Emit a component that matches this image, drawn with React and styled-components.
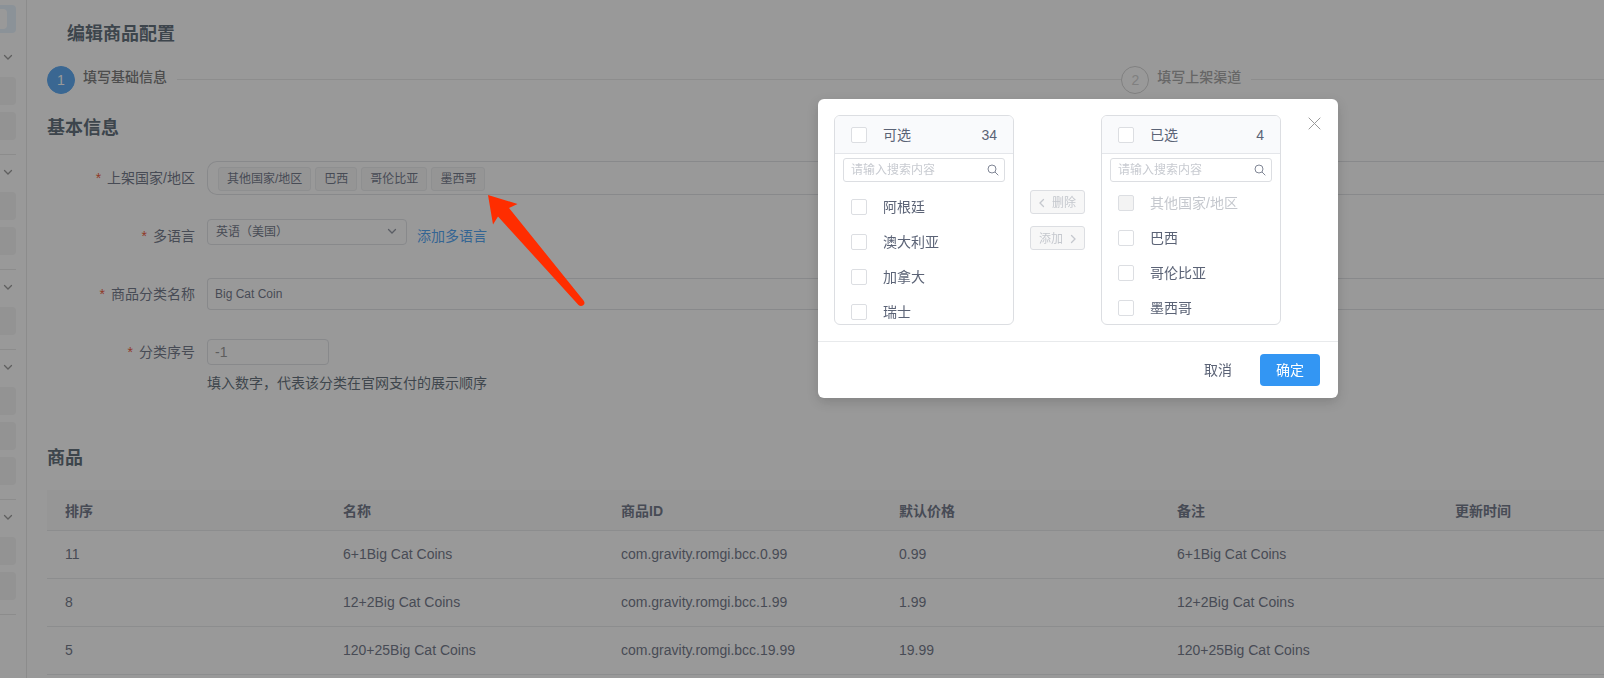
import React from "react";
import styled, { createGlobalStyle } from "styled-components";

const GlobalStyle = createGlobalStyle`
  * { box-sizing: border-box; }
  body {
    margin: 0;
    overflow: hidden;
    background: #fff;
    color: #5b6376;
    font: 14px/20px "Liberation Sans", "Noto Sans CJK SC", sans-serif;
  }
  button, input, select { font: inherit; color: inherit; margin: 0; }
`;

const Page = styled.div`
  display: flex;
  min-height: 100vh;
`;

const Sidebar = styled.nav`
  width: 27px;
  flex: none;
  padding: 5px 10px 0 0;
  border-right: 1px solid #e4e4e4;
`;

const MenuItem = styled.div`
  height: 28px;
  display: flex;
  align-items: center;
  border-radius: 0 4px 4px 0;
  background: ${(p) => (p.$active ? "#e3f1fd" : "#f2f2f2")};
`;

const MenuIcon = styled.span`
  width: 7px;
  height: 20px;
  border-radius: 0 4px 4px 0;
  background: #fff;
`;

const MenuGroup = styled.div`
  display: flex;
  flex-direction: column;
  gap: 7px;
  padding-bottom: 14px;
  border-bottom: 1px solid #e4e4e4;
  &:nth-child(2) { margin-top: 7px; }
`;

const MenuToggle = styled.button`
  height: 30px;
  padding: 5px 4px 0 0;
  border: 0;
  background: none;
  display: flex;
  align-items: center;
  justify-content: flex-end;
  color: #8a8a8a;
`;

const Main = styled.main`
  flex: 1;
  min-width: 0;
  padding: 20px 0 0 20px;
`;

const Title = styled.h2`
  margin: 0;
  padding-left: ${(p) => (p.$page ? "20px" : "0")};
  font-size: 18px;
  line-height: 28px;
  font-weight: 700;
  color: #465665;
`;

const Steps = styled.ol`
  display: grid;
  grid-template-columns: 69% 31%;
  margin: 18px 0 0;
  padding: 0;
  list-style: none;
`;

const Step = styled.li`
  display: flex;
  height: 28px;
  line-height: 22px;
  color: ${(p) => (p.$current ? "#666" : "#999")};
  font-weight: 500;
  &::after {
    content: "";
    flex: 1;
    height: 1px;
    margin: 13px 0 0 10px;
    background: #e6e6e6;
  }
`;

const StepNumber = styled.span`
  width: 28px;
  height: 28px;
  margin-right: 8px;
  border: 1px solid ${(p) => (p.$current ? "#409af0" : "#ccc")};
  border-radius: 50%;
  display: flex;
  align-items: center;
  justify-content: center;
  background: ${(p) => (p.$current ? "#409af0" : "#fff")};
  color: ${(p) => (p.$current ? "#fff" : "#ccc")};
  font-weight: 400;
`;

const Section = styled.section`
  margin-top: 20px;
`;

const Form = styled.form`
  margin-top: 19px;
  display: flex;
  flex-direction: column;
`;

const FormRow = styled.div`
  display: flex;
  gap: 12px;
  min-height: 58px;
`;

const Label = styled.label`
  width: 148px;
  flex: none;
  height: 34px;
  line-height: 34px;
  text-align: right;
  &::before {
    content: "*";
    margin-right: 6px;
    color: #ed4014;
  }
`;

const Field = styled.div`
  flex: 1;
  min-width: 0;
  height: 34px;
  display: flex;
  align-items: ${(p) => (p.$top ? "flex-start" : "center")};
  gap: 10px;
`;

const TagBox = styled.div`
  flex: 1;
  height: 34px;
  display: flex;
  align-items: center;
  gap: 4px;
  padding: 2px 0 0 10px;
  border: 1px solid #dcdee2;
  border-right: 0;
  border-radius: 10px 0 0 10px;
`;

const Tag = styled.span`
  height: 24px;
  padding: 0 8px;
  border: 1px solid #e8eaec;
  border-radius: 3px;
  background: #f7f7f7;
  font-size: 12px;
  line-height: 22px;
`;

const SelectWrap = styled.div`
  position: relative;
  width: 200px;
  svg {
    position: absolute;
    top: 10px;
    right: 11px;
    color: #808695;
    pointer-events: none;
  }
`;

const Select = styled.select`
  display: block;
  width: 100%;
  height: 26px;
  padding: 0 8px;
  appearance: none;
  border: 1px solid #dcdee2;
  border-radius: 4px;
  background: #fff;
  font-size: 12px;
`;

const AddLink = styled.a`
  color: #3496f2;
  text-decoration: none;
  line-height: 34px;
`;

const TextInput = styled.input`
  flex: 1;
  min-width: 0;
  height: 32px;
  padding: 0 7px;
  border: 1px solid #dcdee2;
  border-right: 0;
  border-radius: 4px 0 0 4px;
  background: #fff;
  font-size: 12px;
`;

const NumberField = styled.div`
  display: flex;
  flex-direction: column;
  gap: 8px;
  padding-top: 4px;
`;

const NumberInput = styled.input`
  width: 122px;
  height: 26px;
  padding: 0 7px;
  border: 1px solid #dcdee2;
  border-radius: 4px;
  background: #fff;
  color: #888;
`;

const Hint = styled.p`
  margin: 0;
  color: #4a5866;
`;

const ProductSection = styled.section`
  margin-top: 51px;
`;

const Table = styled.table`
  width: 100%;
  margin-top: 18px;
  table-layout: fixed;
  border-collapse: collapse;
  th, td {
    height: 48px;
    padding: 0 18px;
    border-bottom: 1px solid #e4e6e9;
    text-align: left;
    white-space: nowrap;
  }
  th {
    height: 40px;
    padding-top: 3px;
    background: #f8f8f9;
    font-weight: 700;
  }
`;

const Column = styled.col`
  width: ${(p) => (p.$last ? "auto" : "278px")};
`;

const Mask = styled.div`
  position: fixed;
  inset: 0;
  background: rgba(51, 51, 51, 0.5);
`;

const Arrow = styled.svg`
  position: absolute;
  left: 488px;
  top: 195px;
`;

const Dialog = styled.div`
  position: absolute;
  top: 99px;
  right: 266px;
  width: 520px;
  border-radius: 6px;
  background: #fff;
  box-shadow: 0 4px 12px rgba(0, 0, 0, 0.15);
`;

const CloseButton = styled.button`
  position: absolute;
  top: 18px;
  right: 17px;
  padding: 0;
  width: 13px;
  height: 13px;
  border: 0;
  background: none;
  color: #999;
  display: flex;
`;

const DialogBody = styled.div`
  display: flex;
  align-items: center;
  gap: 16px;
  padding: 16px;
`;

const DialogFooter = styled.footer`
  display: flex;
  justify-content: flex-end;
  gap: 12px;
  padding: 12px 18px;
  border-top: 1px solid #e8eaec;
`;

const ActionButton = styled.button`
  height: 32px;
  padding: 0 16px;
  border: 0;
  border-radius: 4px;
  background: ${(p) => (p.$primary ? "#3396f3" : "transparent")};
  color: ${(p) => (p.$primary ? "#fff" : "#5b6376")};
`;

const Panel = styled.section`
  width: 180px;
  height: 210px;
  border: 1px solid #dcdee2;
  border-radius: 6px;
  overflow: hidden;
`;

const PanelHeader = styled.header`
  display: flex;
  align-items: center;
  justify-content: space-between;
  height: 38px;
  padding: 0 16px;
  border-bottom: 1px solid #e4e6ea;
  background: #f9fafc;
`;

const CheckLabel = styled.label`
  display: flex;
  align-items: center;
  gap: 16px;
  color: ${(p) => (p.$disabled ? "#c5c8ce" : "#5b6376")};
`;

const Checkbox = styled.input`
  appearance: none;
  width: 16px;
  height: 16px;
  margin: 0;
  border: 1px solid #dcdee2;
  border-radius: 2px;
  background: #fff;
  &:disabled { background: #f3f3f3; }
`;

const SearchBox = styled.div`
  display: flex;
  align-items: center;
  height: 24px;
  margin: 4px 8px 0;
  padding: 0 5px 0 7px;
  border: 1px solid #dcdee2;
  border-radius: 3px;
  color: #808695;
`;

const SearchInput = styled.input`
  flex: 1;
  min-width: 0;
  padding: 0;
  border: 0;
  outline: 0;
  background: none;
  font-size: 12px;
  line-height: 20px;
  &::placeholder { color: #c8cbd1; opacity: 1; }
`;

const Options = styled.ul`
  display: flex;
  flex-direction: column;
  gap: 15px;
  margin: ${(p) => (p.$tall ? "15px" : "11px")} 0 0;
  padding: 0 16px;
  list-style: none;
`;

const Transfer = styled.div`
  display: flex;
  flex-direction: column;
  gap: 12px;
`;

const MoveButton = styled.button`
  width: 55px;
  height: 24px;
  padding: 1px 0 0;
  display: flex;
  align-items: center;
  justify-content: center;
  gap: 8px;
  border: 1px solid #dcdee2;
  border-radius: 3px;
  background: #f7f7f7;
  font-size: 12px;
  &:disabled { color: #c5c8ce; }
`;

const chevrons = {
  down: [8, 5, "M0.5 0.5 4 4 7.5 0.5"],
  left: [5, 8, "M4.5 0.5 1 4 4.5 7.5"],
  right: [5, 8, "M0.5 0.5 4 4 0.5 7.5"],
};

function Chevron({ direction }) {
  const [width, height, d] = chevrons[direction];
  return (
    <svg width={width} height={height} fill="none" stroke="currentColor" strokeWidth="1.3" strokeLinecap="round" overflow="visible" aria-hidden="true">
      <path d={d} />
    </svg>
  );
}

const menuGroups = [2, 2, 1, 3, 2];
const countries = ["其他国家/地区", "巴西", "哥伦比亚", "墨西哥"];
const available = ["阿根廷", "澳大利亚", "加拿大", "瑞士"];
const columns = ["排序", "名称", "商品ID", "默认价格", "备注", "更新时间"];
const products = [
  ["11", "6+1Big Cat Coins", "com.gravity.romgi.bcc.0.99", "0.99", "6+1Big Cat Coins", ""],
  ["8", "12+2Big Cat Coins", "com.gravity.romgi.bcc.1.99", "1.99", "12+2Big Cat Coins", ""],
  ["5", "120+25Big Cat Coins", "com.gravity.romgi.bcc.19.99", "19.99", "120+25Big Cat Coins", ""],
];

function TransferPanel({ title, count, items, tall, disabledItem }) {
  return (
    <Panel>
      <PanelHeader>
        <CheckLabel><Checkbox type="checkbox" />{title}</CheckLabel>
        <span>{count}</span>
      </PanelHeader>
      <SearchBox>
        <SearchInput type="text" placeholder="请输入搜索内容" aria-label={title} />
        <svg width="12" height="12" viewBox="0 0 12 12" fill="none" stroke="currentColor" aria-hidden="true">
          <circle cx="5" cy="5" r="4" />
          <path d="M8 8 11.3 11.3" />
        </svg>
      </SearchBox>
      <Options $tall={tall}>
        {items.map((item) => (
          <li key={item}>
            <CheckLabel $disabled={item === disabledItem}>
              <Checkbox type="checkbox" disabled={item === disabledItem} />{item}
            </CheckLabel>
          </li>
        ))}
      </Options>
    </Panel>
  );
}

export default function App() {
  return (
    <>
      <GlobalStyle />
      <Page>
        <Sidebar>
          <MenuItem $active><MenuIcon /></MenuItem>
          {menuGroups.map((count, group) => (
            <MenuGroup key={group}>
              <MenuToggle type="button" aria-label="展开"><Chevron direction="down" /></MenuToggle>
              {Array.from({ length: count }, (_, i) => <MenuItem key={i} />)}
            </MenuGroup>
          ))}
        </Sidebar>
        <Main>
          <Title as="h1" $page>编辑商品配置</Title>
          <Steps>
            <Step $current><StepNumber $current>1</StepNumber>填写基础信息</Step>
            <Step><StepNumber>2</StepNumber>填写上架渠道</Step>
          </Steps>
          <Section>
            <Title>基本信息</Title>
            <Form>
              <FormRow>
                <Label as="span">上架国家/地区</Label>
                <Field>
                  <TagBox>{countries.map((c) => <Tag key={c}>{c}</Tag>)}</TagBox>
                </Field>
              </FormRow>
              <FormRow>
                <Label htmlFor="language">多语言</Label>
                <Field $top>
                  <SelectWrap>
                    <Select id="language"><option>英语（美国）</option></Select>
                    <Chevron direction="down" />
                  </SelectWrap>
                  <AddLink href="#language">添加多语言</AddLink>
                </Field>
              </FormRow>
              <FormRow>
                <Label htmlFor="category">商品分类名称</Label>
                <Field><TextInput id="category" type="text" defaultValue="Big Cat Coin" /></Field>
              </FormRow>
              <FormRow>
                <Label htmlFor="order">分类序号</Label>
                <NumberField>
                  <NumberInput id="order" type="text" defaultValue="-1" />
                  <Hint>填入数字，代表该分类在官网支付的展示顺序</Hint>
                </NumberField>
              </FormRow>
            </Form>
          </Section>
          <ProductSection>
            <Title>商品</Title>
            <Table>
              <colgroup>
                {columns.map((c, i) => <Column key={c} $last={i === columns.length - 1} />)}
              </colgroup>
              <thead>
                <tr>{columns.map((c) => <th key={c} scope="col">{c}</th>)}</tr>
              </thead>
              <tbody>
                {products.map((row) => (
                  <tr key={row[0]}>{row.map((cell, i) => <td key={i}>{cell}</td>)}</tr>
                ))}
              </tbody>
            </Table>
          </ProductSection>
        </Main>
      </Page>
      <Mask>
        <Arrow width="98" height="112" viewBox="0 0 98 112" aria-hidden="true">
          <path d="M0 0 29.5 9 21 13 95.5 105.5Q97.5 108 95.5 110 93 112 90.5 110L10 21.5 5 29.5Z" fill="#ff2d00" />
        </Arrow>
        <Dialog role="dialog" aria-modal="true" aria-label="上架国家/地区">
          <CloseButton type="button" aria-label="关闭">
            <svg width="13" height="13" viewBox="0 0 13 13" stroke="currentColor" aria-hidden="true">
              <path d="M0.7 0.7 12.3 12.3M12.3 0.7 0.7 12.3" />
            </svg>
          </CloseButton>
          <DialogBody>
            <TransferPanel title="可选" count={34} items={available} tall />
            <Transfer>
              <MoveButton type="button" disabled><Chevron direction="left" />删除</MoveButton>
              <MoveButton type="button" disabled>添加<Chevron direction="right" /></MoveButton>
            </Transfer>
            <TransferPanel title="已选" count={4} items={countries} disabledItem={countries[0]} />
          </DialogBody>
          <DialogFooter>
            <ActionButton type="button">取消</ActionButton>
            <ActionButton type="button" $primary>确定</ActionButton>
          </DialogFooter>
        </Dialog>
      </Mask>
    </>
  );
}
